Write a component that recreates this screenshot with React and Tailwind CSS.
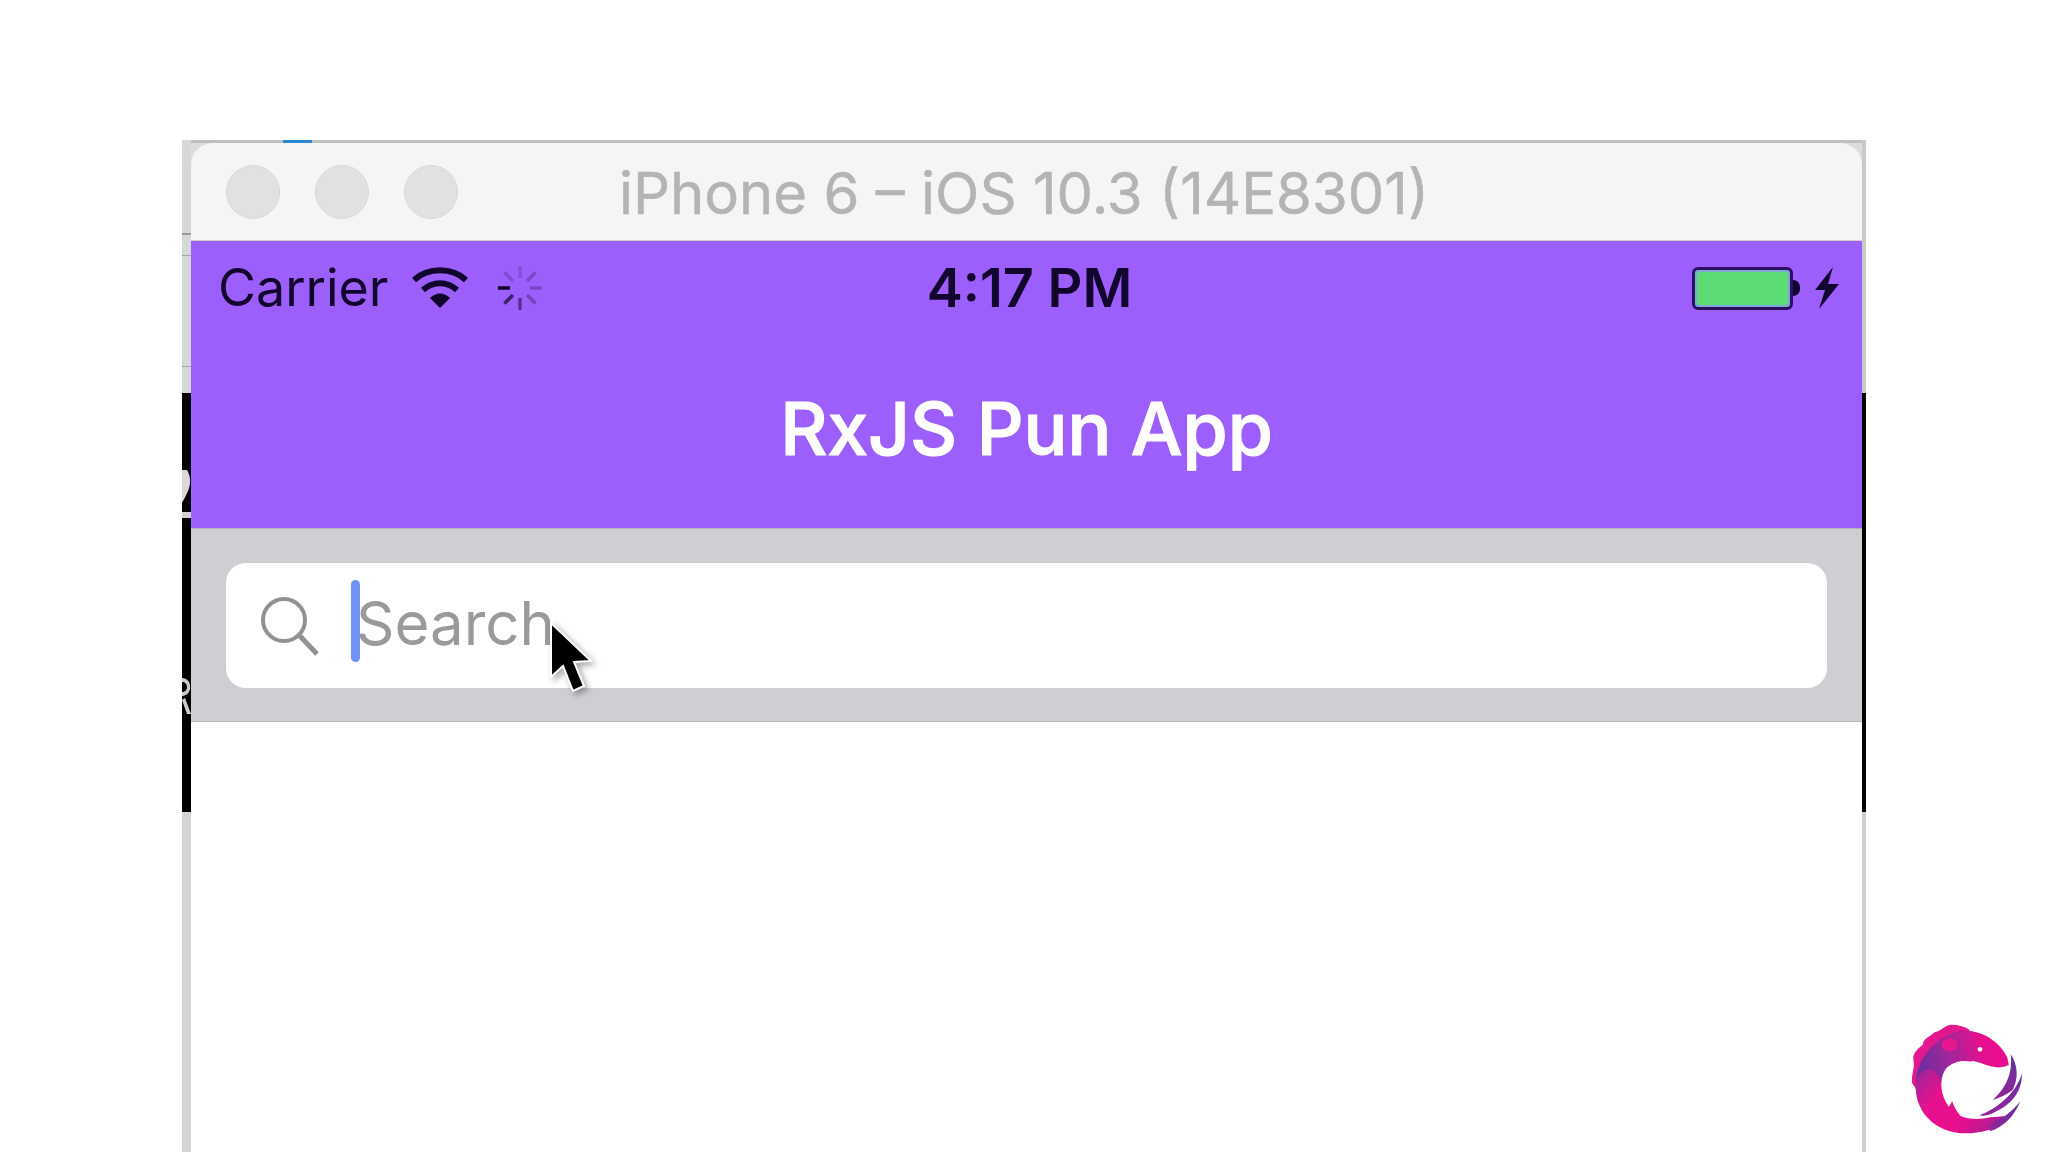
const font = { fontFamily: 'Inter, "Liberation Sans", sans-serif' };

function TrafficLight() {
  return <div className="w-[54px] h-[54px] rounded-full bg-[#e1e1e2] border border-[#d9d9da]" />;
}

function WifiIcon() {
  return (
    <svg width="56" height="44" viewBox="0 0 56 44" className="block">
      <path d="M2 14 C16 1 40 1 54 14" fill="none" stroke="#12052e" strokeWidth="6" />
      <path d="M11 24 C21 15 35 15 45 24" fill="none" stroke="#12052e" strokeWidth="6" />
      <path d="M18 32 C24 26 32 26 38 32 L28 42 Z" fill="#12052e" />
    </svg>
  );
}

function Spinner() {
  const spokes = [
    [0, 0.15], [45, 0.25], [90, 0.25], [135, 0.3], [180, 0.5], [225, 0.7], [270, 1], [315, 0.2],
  ];
  return (
    <svg width="48" height="48" viewBox="0 0 48 48" className="block">
      {spokes.map(([deg, alpha]) => (
        <line
          key={deg}
          x1="24" y1="2" x2="24" y2="14"
          stroke="#12052e"
          strokeWidth="3.5"
          opacity={alpha}
          transform={`rotate(${deg} 24 24)`}
        />
      ))}
    </svg>
  );
}

function Battery() {
  return (
    <div className="flex items-center">
      <div className="w-[101px] h-[43px] rounded-[6px] border-[3px] border-[#2a0f63] bg-[#7fa6d6] p-[2px]">
        <div className="w-full h-full rounded-[3px] bg-[#5cdc74]" />
      </div>
      <div className="w-[7px] h-[16px] rounded-r-full bg-[#12052e]" />
    </div>
  );
}

function Bolt() {
  return (
    <svg width="26" height="42" viewBox="0 0 26 42" className="block">
      <path d="M19 0 L1 23 L11 23 L5 42 L25 17 L14 17 Z" fill="#12052e" />
    </svg>
  );
}

function RxLogo() {
  return (
    <svg width="168" height="142" viewBox="0 0 504 426" className="block">
      <defs>
        <linearGradient id="rxBody" gradientUnits="userSpaceOnUse" x1="130" y1="170" x2="360" y2="350">
          <stop offset="0" stopColor="#a0249a" />
          <stop offset="0.3" stopColor="#e8108e" />
          <stop offset="0.65" stopColor="#e80e8c" />
          <stop offset="1" stopColor="#a61f96" />
        </linearGradient>
        <linearGradient id="rxWing" x1="0" y1="0" x2="0" y2="1">
          <stop offset="0" stopColor="#5f329c" />
          <stop offset="1" stopColor="#93259a" />
        </linearGradient>
        <linearGradient id="rxHead" gradientUnits="userSpaceOnUse" x1="120" y1="170" x2="350" y2="110">
          <stop offset="0" stopColor="#6f2ea0" />
          <stop offset="0.45" stopColor="#a8249a" />
          <stop offset="0.8" stopColor="#e4108e" />
          <stop offset="1" stopColor="#ea0c8e" />
        </linearGradient>
      </defs>
      <path d="M215 44 C195 44 185 62 165 66 C150 80 130 85 128 104 C112 118 98 128 100 150 C106 170 94 190 96 218 L110 240 L170 130 L240 75 L270 60 C255 50 235 44 215 44 Z" fill="#e3188f" />
      <path d="M108 215 C98 300 165 372 260 370 C300 369 345 358 372 338 L380 318 L330 322 C300 330 262 328 242 318 C230 305 222 290 216 272 C214 280 210 286 206 290 C182 255 176 212 196 178 C215 155 245 150 275 155 L250 100 L160 120 Z" fill="url(#rxBody)" />
      <path d="M108 215 C110 150 160 85 235 63 C290 55 345 85 372 125 C382 140 386 152 386 165 C362 178 335 172 305 160 C270 147 222 146 196 178 C185 192 182 205 182 220 C170 165 130 165 108 215 Z" fill="url(#rxHead)" />
      <ellipse cx="208" cy="104" rx="24" ry="19" fill="#e8178f" />
      <circle cx="300" cy="118" r="7" fill="#ffffff" />
      <path d="M392 132 C414 165 416 205 398 240 C380 254 358 264 338 270 C372 240 400 195 392 132 Z" fill="url(#rxWing)" />
      <path d="M426 190 C426 240 402 280 345 306 C330 314 312 320 298 316 C345 300 410 250 426 190 Z" fill="url(#rxWing)" />
      <path d="M421 274 C402 320 370 352 330 364 C325 350 330 345 345 335 C375 322 400 300 421 274 Z" fill="url(#rxWing)" />
    </svg>
  );
}

function Cursor() {
  return (
    <svg width="50" height="76" viewBox="0 0 50 76" className="block drop-shadow-[3px_3px_3px_rgba(0,0,0,0.35)]">
      <path d="M4 2 L4 56 L16 45 L26 70 L37 65 L27 41 L44 40 Z" fill="#000000" stroke="#ffffff" strokeWidth="2" />
    </svg>
  );
}

function SearchIcon() {
  return (
    <svg width="62" height="62" viewBox="0 0 62 62" className="block">
      <circle cx="25" cy="25" r="21" fill="none" stroke="#929292" strokeWidth="4" />
      <line x1="40" y1="40" x2="58" y2="59" stroke="#929292" strokeWidth="5" />
    </svg>
  );
}

function LeftStrip() {
  return (
    <div className="w-[9px] flex flex-col h-full shrink-0">
      <div className="h-[253px] bg-[#d6d8d8] flex flex-col">
        <div className="mt-[93px] h-[2px] bg-[#9a9a9a]" />
        <div className="mt-[20px] h-[1px] bg-[#a4a4a4]" />
        <div className="mt-[110px] h-[1px] bg-[#a4a4a4]" />
      </div>
      <div className="h-[419px] bg-black flex flex-col">
        <svg width="9" height="37" viewBox="0 0 9 37" className="block mt-[77px] shrink-0">
          <path d="M0 0 L5 0 C9 6 9 15 6 21 C4 26 1 31 0 33 Z" fill="#d8d8d8" />
        </svg>
        <div className="mt-[5px] h-[6px] bg-[#d0d0d0] shrink-0" />
        <svg width="9" height="37" viewBox="0 0 9 37" className="block mt-[160px] shrink-0">
          <path d="M0 0 C6 0 9 5 8 11 C7 16 3 18 0 18 L0 14 C3 14 5 12 5 9 C5 6 3 4 0 4 Z" fill="#cccccc" />
          <path d="M0 22 L3 20 L9 36 L5 36 Z" fill="#cccccc" />
        </svg>
      </div>
      <div className="flex-1 bg-[#d4d4d4]" />
    </div>
  );
}

function RightStrip() {
  return (
    <div className="w-[4px] flex flex-col h-full shrink-0">
      <div className="h-[253px] bg-[#c8c8c8]" />
      <div className="h-[419px] bg-black" />
      <div className="flex-1 bg-[#cfcfcf]" />
    </div>
  );
}

export default function App() {
  return (
    <div className="relative w-[2048px] h-[1152px] bg-white overflow-hidden" style={font}>
      <div className="pt-[140px] pl-[182px] h-full blur-[0.6px]">
        <div className="flex w-[1684px] h-full">
          <LeftStrip />
          <div className="flex-1 flex flex-col min-w-0 border-t-[3px] border-[#c0c0c0] bg-[#dcdcdc] relative">
            <div className="absolute left-[92px] top-[-3px] w-[29px] h-[4px] bg-[#2a86d0]" />
            <div className="h-[98px] rounded-t-[22px] bg-[#f5f5f7] border-b border-[#d0d0d0] flex items-center relative">
              <div className="flex gap-[35px] pl-[35px]">
                <TrafficLight />
                <TrafficLight />
                <TrafficLight />
              </div>
              <div className="absolute inset-0 flex items-center justify-center text-[58px] leading-none text-[#b4b4b4] pr-[5px] pt-[2px] [-webkit-text-stroke:0.5px_#b4b4b4]">
                iPhone 6 – iOS 10.3 (14E8301)
              </div>
            </div>

            <div className="h-[287px] bg-[#9d5ffb] flex flex-col">
              <div className="h-[94px] relative flex items-center justify-between pl-[27px] pr-[22px]">
                <div className="flex items-center">
                  <span className="text-[52px] leading-none text-[#12052e]">Carrier</span>
                  <div className="ml-[24px]"><WifiIcon /></div>
                  <div className="ml-[28px]"><Spinner /></div>
                </div>
                <div className="absolute inset-0 flex items-center justify-center pl-[6px] text-[54px] font-semibold leading-none text-[#12052e]">
                  4:17 PM
                </div>
                <div className="flex items-center gap-[14px]">
                  <Battery />
                  <Bolt />
                </div>
              </div>
              <div className="flex-1 flex items-center justify-center pb-[7px] text-[73px] font-medium leading-none text-white [-webkit-text-stroke:1.2px_#ffffff]">
                RxJS Pun App
              </div>
            </div>

            <div className="h-[194px] bg-[#cfcfd3] border-t border-[#b5b5b8] border-b px-[35px] py-[34px]">
              <div className="h-[125px] rounded-[20px] bg-white flex items-center pl-[33px] relative">
                <SearchIcon />
                <div className="w-[9px] h-[82px] rounded-full bg-[#6c93f5] ml-[30px] mb-[10px] shrink-0" />
                <span className="text-[60px] leading-none text-[#9a9a9a] ml-[-4px] mb-[6px]">Search</span>
              </div>
            </div>

            <div className="flex-1 bg-white" />
          </div>
          <RightStrip />
        </div>
      </div>

      <div className="absolute left-[547px] top-[621px]"><Cursor /></div>
      <div className="absolute left-[1880px] top-[1010px]"><RxLogo /></div>
    </div>
  );
}
